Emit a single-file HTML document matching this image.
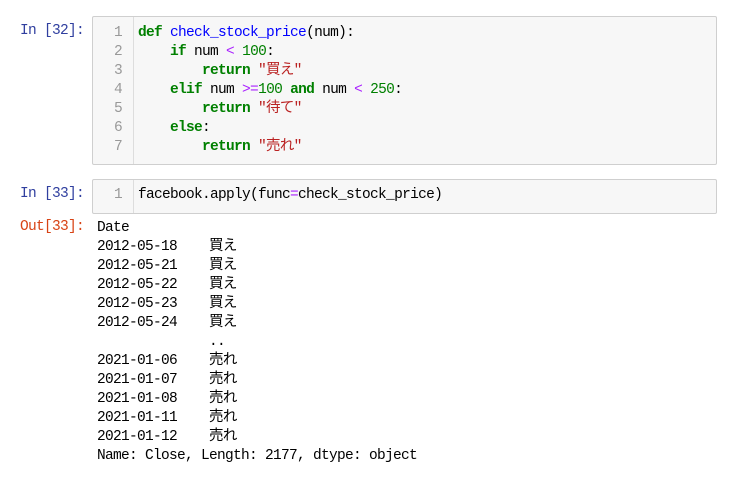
<!DOCTYPE html>
<html><head><meta charset="utf-8"><style>
body{margin:0;background:#fff;width:730px;height:482px;overflow:hidden;position:relative;font-family:"Liberation Mono","Noto Sans CJK JP",monospace;font-size:14.5px;letter-spacing:-0.7px;}
.p{position:absolute;white-space:pre;line-height:19px;}
.prompt{color:#303F9F;text-align:right;width:84px;left:0;}
.box{position:absolute;left:92px;width:623px;background:#f7f7f7;border:1px solid #cfcfcf;border-radius:2px;}
.gut{position:absolute;left:0;top:0;bottom:0;width:40px;border-right:1px solid #ddd;}
.ln{color:#999;text-align:right;width:29px;left:0;}
.k{color:#008000;font-weight:bold}.o{color:#AA22FF}.n{color:#008000}.s{color:#BA2121}.f{color:#0000FF}
</style></head><body>
<div class="p prompt" style="top:22px">In [32]:</div>
<div class="box" style="top:16px;height:147px"><div class="gut"></div>
<div class="p ln" style="top:7px">1
2
3
4
5
6
7</div>
<div class="p" style="left:45px;top:7px"><span class="k">def</span> <span class="f">check_stock_price</span>(num):
    <span class="k">if</span> num <span class="o">&lt;</span> <span class="n">100</span>:
        <span class="k">return</span> <span class="s">"買え"</span>
    <span class="k">elif</span> num <span class="o">&gt;=</span><span class="n">100</span> <span class="k">and</span> num <span class="o">&lt;</span> <span class="n">250</span>:
        <span class="k">return</span> <span class="s">"待て"</span>
    <span class="k">else</span>:
        <span class="k">return</span> <span class="s">"売れ"</span></div>
</div>
<div class="p prompt" style="top:185px">In [33]:</div>
<div class="box" style="top:179px;height:33px"><div class="gut"></div>
<div class="p ln" style="top:6px">1</div>
<div class="p" style="left:45px;top:6px">facebook.apply(func<span class="o">=</span>check_stock_price)</div>
</div>
<div class="p prompt" style="top:218px;color:#D84315">Out[33]:</div>
<div class="p" style="left:97px;top:219px;color:#000">Date
2012-05-18    買え
2012-05-21    買え
2012-05-22    買え
2012-05-23    買え
2012-05-24    買え
              ..
2021-01-06    売れ
2021-01-07    売れ
2021-01-08    売れ
2021-01-11    売れ
2021-01-12    売れ
Name: Close, Length: 2177, dtype: object</div>
</body></html>
